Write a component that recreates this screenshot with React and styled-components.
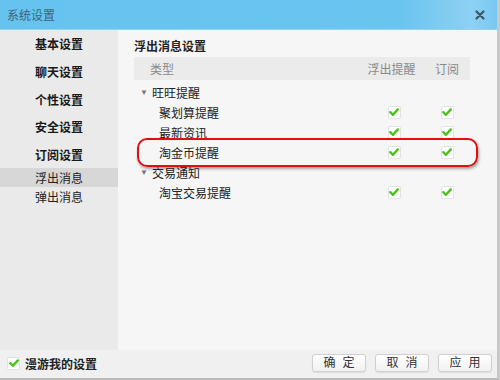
import React, { useState } from 'react';
import styled, { createGlobalStyle } from 'styled-components';

const GlobalStyle = createGlobalStyle`
  html, body { margin: 0; padding: 0; }
  body {
    font-family: "Liberation Sans", "Noto Sans CJK SC", sans-serif;
    font-size: 12px;
    color: #333;
  }
`;

const Window = styled.div`
  width: 500px;
  height: 380px;
  display: flex;
  flex-direction: column;
  background: #f6f6f6;
  box-sizing: border-box;
  border-right: 3px solid #c8c8c8;
  border-bottom: 2px solid #b9b9b9;
  overflow: hidden;
`;

const TitleBar = styled.div`
  height: 29px;
  flex: none;
  display: flex;
  align-items: center;
  justify-content: space-between;
  padding: 0 10px 0 7px;
  background: linear-gradient(90deg, #66c3f0 0%, #69c4f0 80%, #8dd1f3 95%, #78c8f1 100%);
  border-bottom: 1px solid #9ccfe8;
`;

const Title = styled.span`
  color: #3f6275;
  font-size: 12px;
`;

const CloseButton = styled.button`
  border: 0;
  background: none;
  padding: 0;
  width: 14px;
  height: 14px;
  display: flex;
  align-items: center;
  justify-content: center;
`;

const Body = styled.div`
  flex: 1;
  display: flex;
  min-height: 0;
`;

const Sidebar = styled.nav`
  width: 118px;
  flex: none;
  background: #eaeaea;
  display: flex;
  flex-direction: column;
`;

const MainItem = styled.div`
  height: 27.7px;
  display: flex;
  align-items: center;
  justify-content: center;
  font-weight: bold;
  color: #1a1a1a;
`;

const SubItem = styled.div`
  height: 19px;
  display: flex;
  align-items: center;
  justify-content: center;
  color: #222;
  background: ${p => (p.$active ? '#d7d7d7' : 'transparent')};
`;

const Content = styled.section`
  flex: 1;
  padding: 9px 27px 0 16px;
`;

const Heading = styled.h2`
  margin: 0 0 2px;
  font-size: 12px;
  font-weight: bold;
  color: #222;
  line-height: 16px;
`;

const HeaderRow = styled.div`
  height: 23px;
  display: grid;
  grid-template-columns: 1fr 60px 46px;
  align-items: center;
  background: #ebebeb;
  color: #8a8a8a;
  padding-left: 16px;
  margin-bottom: 2px;
`;

const HeadCell = styled.span`
  text-align: ${p => (p.$center ? 'center' : 'left')};
  padding-right: ${p => (p.$shift ? '5px' : '0')};
`;

const Row = styled.div`
  position: relative;
  height: 20px;
  display: grid;
  grid-template-columns: 1fr 60px 46px;
  align-items: center;
  padding-left: ${p => (p.$group ? '6px' : '25px')};
  color: #222;
`;

const GroupLabel = styled.span`
  display: flex;
  align-items: center;
  gap: 4px;
`;

const Caret = styled.span`
  font-size: 8px;
  color: #777;
`;

const CheckCell = styled.span`
  display: flex;
  justify-content: center;
`;

const CheckBox = styled.span`
  width: 13px;
  height: 13px;
  border-radius: 2px;
  background: #fff;
  border: 1px solid #e2e2e2;
  display: flex;
  align-items: center;
  justify-content: center;
  box-sizing: border-box;
`;

const Highlight = styled.span`
  position: absolute;
  left: 3px;
  right: -8px;
  top: -4px;
  bottom: -5px;
  border: 2px solid #e01010;
  border-radius: 10px;
  box-shadow: 1px 2px 3px rgba(0, 0, 0, 0.35);
  pointer-events: none;
`;

const Footer = styled.footer`
  height: 28px;
  flex: none;
  display: flex;
  align-items: center;
  justify-content: space-between;
  padding: 0 5px 2px 7px;
  box-sizing: border-box;
  background: #f0f0f0;
`;

const FooterCheck = styled.label`
  display: flex;
  align-items: center;
  gap: 5px;
  font-weight: bold;
  color: #222;
`;

const Buttons = styled.div`
  display: flex;
  gap: 9px;
`;

const Button = styled.button`
  width: 54px;
  height: 18px;
  border: 1px solid #d0d0d0;
  border-radius: 3px;
  background: linear-gradient(#ffffff, #f1f1f1);
  box-shadow: 0 1px 1px rgba(0, 0, 0, 0.08);
  font-family: inherit;
  font-size: 12px;
  color: #333;
  letter-spacing: 7px;
  padding: 0 0 0 7px;
  line-height: 16px;
`;

const Tick = ({ size = 10 }) => (
  <svg width={size} height={size} viewBox="0 0 10 10">
    <path d="M1.3 5.2 L4 7.8 L8.8 2.4" fill="none" stroke="#4cc21c" strokeWidth="2.4" strokeLinecap="round" strokeLinejoin="round" />
  </svg>
);

const Check = () => (
  <CheckCell>
    <CheckBox><Tick /></CheckBox>
  </CheckCell>
);

const groups = [
  { name: '旺旺提醒', items: ['聚划算提醒', '最新资讯', '淘金币提醒'] },
  { name: '交易通知', items: ['淘宝交易提醒'] },
];

export default function App() {
  const [active] = useState('浮出消息');
  return (
    <>
      <GlobalStyle />
      <Window>
        <TitleBar>
          <Title>系统设置</Title>
          <CloseButton aria-label="close">
            <svg width="10" height="10" viewBox="0 0 10 10">
              <path d="M1.5 1.5 L8.5 8.5 M8.5 1.5 L1.5 8.5" stroke="#3d5666" strokeWidth="2.2" strokeLinecap="round" />
            </svg>
          </CloseButton>
        </TitleBar>
        <Body>
          <Sidebar>
            {['基本设置', '聊天设置', '个性设置', '安全设置', '订阅设置'].map(t => (
              <MainItem key={t}>{t}</MainItem>
            ))}
            {['浮出消息', '弹出消息'].map(t => (
              <SubItem key={t} $active={t === active}>{t}</SubItem>
            ))}
          </Sidebar>
          <Content>
            <Heading>浮出消息设置</Heading>
            <HeaderRow>
              <HeadCell>类型</HeadCell>
              <HeadCell $center $shift>浮出提醒</HeadCell>
              <HeadCell $center>订阅</HeadCell>
            </HeaderRow>
            {groups.map(g => (
              <React.Fragment key={g.name}>
                <Row $group>
                  <GroupLabel><Caret>▼</Caret>{g.name}</GroupLabel>
                </Row>
                {g.items.map(item => (
                  <Row key={item}>
                    <span>{item}</span>
                    <Check />
                    <Check />
                    {item === '淘金币提醒' && <Highlight />}
                  </Row>
                ))}
              </React.Fragment>
            ))}
          </Content>
        </Body>
        <Footer>
          <FooterCheck>
            <CheckBox><Tick /></CheckBox>
            漫游我的设置
          </FooterCheck>
          <Buttons>
            <Button>确定</Button>
            <Button>取消</Button>
            <Button>应用</Button>
          </Buttons>
        </Footer>
      </Window>
    </>
  );
}
